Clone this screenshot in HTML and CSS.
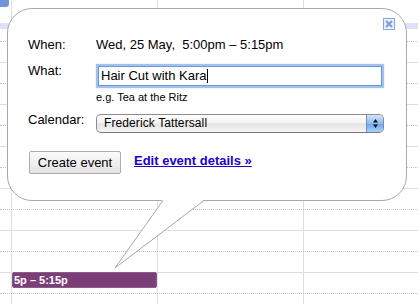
FILE: index.html
```html
<!DOCTYPE html>
<html lang="en">

<head>
    <meta charset="UTF-8">
    <title>Quick add event</title>
    <link rel="stylesheet" href="styles.css">
</head>

<body>
    <div id="grid" class="grid"></div>

    <div class="bubble">
        <a class="close" href="javascript:;">
            <svg width="12" height="12" viewBox="0 0 12 12">
                <rect x=".5" y=".5" width="11" height="11" fill="#e8eefc" stroke="#8ba6e6" />
                <path d="M3 3l6 6M9 3l-6 6" stroke="#7d9be3" stroke-width="2" />
            </svg>
        </a>
        <div class="line">
            <span class="lbl">When:</span>
            <span class="val">Wed, 25 May, &nbsp;5:00pm – 5:15pm</span>
        </div>
        <div class="line what">
            <span class="lbl">What:</span>
            <div class="val">
                <div class="field">Hair Cut with Kara<span class="caret"></span></div>
                <div class="hint">e.g. Tea at the Ritz</div>
            </div>
        </div>
        <div class="line calendar">
            <span class="lbl">Calendar:</span>
            <div class="select">
                <span class="opt">Frederick Tattersall</span>
                <span class="stepper">
                    <svg width="7" height="11" viewBox="0 0 7 11">
                        <path d="M3.5 1L6 4.5H1z M3.5 10L6 6.5H1z" fill="#111" />
                    </svg>
                </span>
            </div>
        </div>
        <div class="actions">
            <button class="btn">Create event</button>
            <a class="link" href="javascript:;">Edit event details »</a>
        </div>
    </div>

    <svg class="tail" width="110" height="72" viewBox="0 0 110 72">
        <polygon points="63,1 105,1 15,70" fill="#fff" />
        <path d="M63 2.5L15 70L104 2.5" fill="none" stroke="#a8a8a8" stroke-width="1" />
    </svg>

    <script>
        var ogrid = document.getElementById('grid');
        var str = '<div class="row head"><div class="cell gutter"><div class="corner"></div></div>' +
            '<div class="cell"></div><div class="cell"></div><div class="cell"></div></div>';

        // half-hour rows: even ones end on a dotted line, odd ones on the hour line
        for (var i = 0; i < 14; i++) {
            var cls = 'row' + (i % 2 ? ' hour' : '') + (i == 0 ? ' band' : '');
            var evt = i == 12 ? '<div class="evt">5p – 5:15p</div>' : '';
            str += '<div class="' + cls + '"><div class="cell gutter"></div><div class="cell">' + evt +
                '</div><div class="cell"></div><div class="cell"></div></div>';
        }
        ogrid.innerHTML = str;
    </script>
</body>

</html>
```

FILE: styles.css
```css
* {
    margin: 0;
    padding: 0;
    box-sizing: border-box;
}

html,
body {
    width: 418px;
    height: 304px;
    overflow: hidden;
}

body {
    position: relative;
    background: #fff;
    font-family: "Liberation Sans", Arial, sans-serif;
    font-size: 13px;
    color: #000;
}

a {
    color: #333;
    text-decoration: none;
}

/* calendar grid */

.row {
    display: flex;
    height: 21px;
    border-bottom: 1px dotted #c4c4c4;
}

.row.hour {
    border-bottom: 1px solid #dddddd;
}

.row.head {
    border-bottom: 0;
}

.row.band {
    background: linear-gradient(#fff 2px, #d9e2f8 2px, #d9e2f8 8px, #fff 8px);
}

.cell {
    flex: none;
    width: 146px;
    border-left: 1px solid #dddddd;
}

.cell.gutter {
    width: 11px;
    border-left: 0;
}

.cell:last-child {
    flex: 1;
}

.corner {
    width: 9px;
    height: 7px;
    background-color: #7194dd;
    border-bottom-right-radius: 3px;
}

.evt {
    margin-top: -1px;
    height: 16px;
    padding-left: 1px;
    border: 1px solid #8d5a89;
    border-radius: 2px;
    background-color: #7b3f77;
    color: #fff;
    font-weight: bold;
    font-size: 11px;
    line-height: 14px;
}

/* bubble */

.bubble {
    position: absolute;
    left: 7px;
    top: 8px;
    width: 400px;
    height: 193px;
    padding: 28px 20px 0;
    border: 1px solid #a8a8a8;
    border-radius: 25px;
    background-color: #fff;
}

.close {
    position: absolute;
    top: 9px;
    right: 11px;
    display: block;
    width: 12px;
    height: 12px;
}

.close svg {
    display: block;
}

.line {
    display: flex;
    line-height: 16px;
}

.lbl {
    flex: none;
    width: 68px;
}

.what {
    margin-top: 10px;
}

.field {
    margin: 3px 0 0 2px;
    width: 284px;
    height: 20px;
    padding: 0 2px;
    border: 1px solid #6a98d8;
    box-shadow: 0 0 1px 2px #a2c2ec;
    line-height: 18px;
}

.caret {
    display: inline-block;
    width: 1px;
    height: 14px;
    margin-left: 1px;
    vertical-align: -3px;
    background-color: #000;
}

.hint {
    margin-top: 4px;
    font-size: 11px;
    line-height: 14px;
}

.calendar {
    margin-top: 8px;
}

.select {
    display: flex;
    margin-top: 2px;
    width: 288px;
    height: 19px;
    border: 1px solid #8c8c8c;
    border-bottom-color: #777;
    border-radius: 5px;
    background: linear-gradient(#ffffff, #f3f3f3 45%, #e4e4e4 55%, #f6f6f6);
    overflow: hidden;
}

.opt {
    flex: 1;
    padding-left: 7px;
    font-size: 12px;
    line-height: 17px;
    letter-spacing: .1px;
}

.stepper {
    display: flex;
    align-items: center;
    justify-content: center;
    width: 17px;
    border-left: 1px solid #6f8fc2;
    background: linear-gradient(#d2e4fa, #8dbaf0 50%, #6aa4ec 50%, #a9d0fa);
}

.stepper svg {
    display: block;
}

.actions {
    display: flex;
    align-items: flex-start;
    margin-top: 18px;
}

.btn {
    margin-left: 1px;
    width: 92px;
    height: 23px;
    border: 1px solid #acacac;
    border-radius: 2px;
    background: linear-gradient(#fbfbfb, #e4e4e4);
    font-family: "Liberation Sans", Arial, sans-serif;
    font-size: 13px;
    color: #000;
}

.link {
    margin: 2px 0 0 13px;
    line-height: 16px;
    font-weight: bold;
    color: #2200cc;
    text-decoration: underline;
}

.tail {
    position: absolute;
    left: 100px;
    top: 198px;
}
```
